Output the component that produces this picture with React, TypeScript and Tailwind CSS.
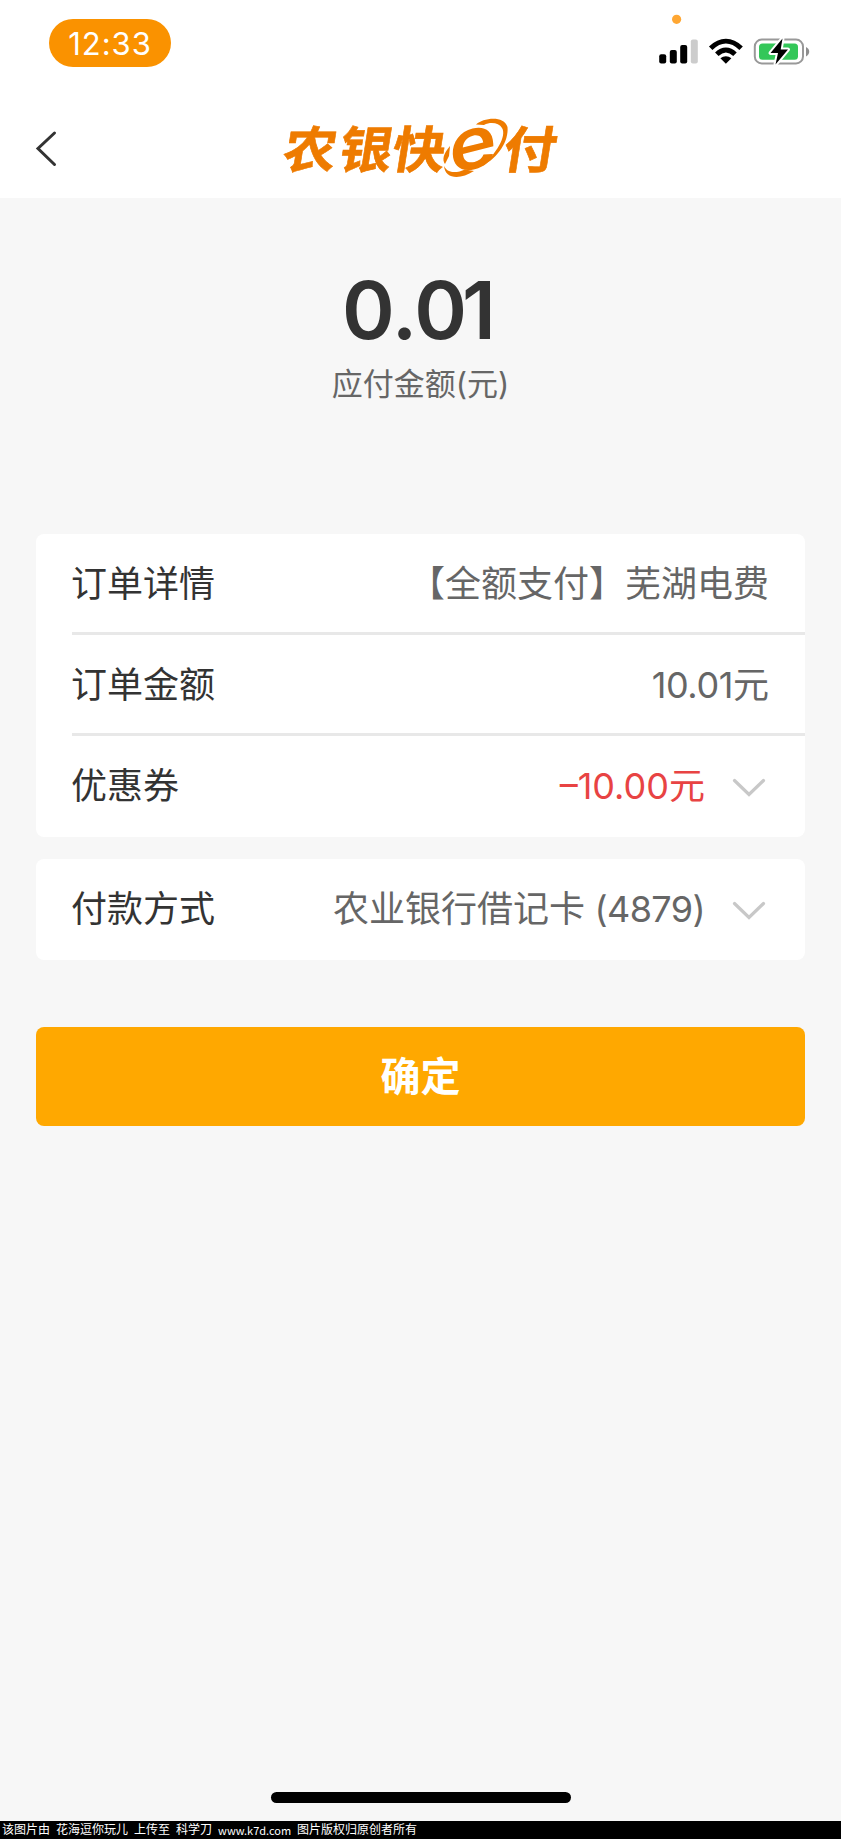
import React from 'react';

interface RowProps {
  label: string;
  children: React.ReactNode;
  divider?: boolean;
  expandable?: boolean;
}

const ChevronDown: React.FC = () => (
  <svg width="36" height="22" viewBox="0 0 36 22" fill="none" className="mt-1.5 shrink-0">
    <path d="M3.5 3.5 18 17.5 32.500 3.5" stroke="#c8c8c8" strokeWidth="3.2" strokeLinecap="round" />
  </svg>
);

const Row: React.FC<RowProps> = ({ label, children, divider = false, expandable = false }) => (
  <div
    className={`ml-9 flex h-[101px] items-center justify-between border-b-[3px] text-4xl ${
      divider ? 'border-[#e8e8e8]' : 'border-transparent'
    } ${expandable ? 'pr-[38px]' : 'pr-9'}`}
  >
    <span className="-ml-px pt-0.5 text-[#333333]">{label}</span>
    <span className="flex items-center gap-[26px] text-[#666666]">
      <span className="pt-0.5 whitespace-nowrap">{children}</span>
      {expandable && <ChevronDown />}
    </span>
  </div>
);

const StatusIcons: React.FC = () => (
  <svg width="201" height="90" viewBox="0 0 201 90">
    <circle cx="36.600" cy="19.300" r="4.600" fill="#ffa733" />
    <rect x="19.200" y="54.300" width="7" height="9.200" rx="2" />
    <rect x="29.800" y="50" width="7" height="13.500" rx="2" />
    <rect x="40.200" y="45" width="7" height="18.500" rx="2" />
    <rect x="50.800" y="39.500" width="7" height="24" rx="2" fill="#cccccc" />
    <g fill="none" stroke="#000" strokeWidth="5">
      <path d="M70.700 48.200C80.500 38.800 91.300 38.800 101.100 48.200" />
      <path d="M76.800 54.200C82.500 48.700 89.300 48.700 95 54.200" />
    </g>
    <path d="M80.400 58.300C83.700 55.500 88.100 55.500 91.400 58.300L85.900 63.700Z" />
    <rect x="114.800" y="39.600" width="48.200" height="23.800" rx="7" fill="none" stroke="#999" strokeWidth="2" />
    <rect x="119" y="43.600" width="39" height="16.200" rx="3.500" fill="#34c759" />
    <path d="M166 47C170.300 49 170.300 54.400 166 56.400Z" fill="#8e8e8e" />
    <path
      d="M142.500 38.500 130.500 53H138L135.500 64.500 148 49.500H140.700Z"
      stroke="#fff"
      strokeWidth="4"
      strokeLinejoin="round"
      paintOrder="stroke"
    />
  </svg>
);

const Logo: React.FC = () => (
  <svg
    width="300"
    height="93"
    viewBox="0 0 300 93"
    fill="#ee7b00"
    className="overflow-visible font-['Noto_Sans_CJK_SC',sans-serif] font-bold"
  >
    <g fontSize="50" stroke="#ee7b00" strokeWidth="0.6">
      <text transform="translate(11 62.500) skewX(-9) scale(1.06 1)">农</text>
      <text transform="translate(67 62.500) skewX(-9) scale(1.06 1)">银</text>
      <text transform="translate(120 62.500) skewX(-9) scale(1.06 1)">快</text>
      <text transform="translate(231 62.500) skewX(-9) scale(1.06 1)">付</text>
    </g>
    <text
      transform="translate(180 69.500) rotate(-14) skewX(-12) scale(1.16 1)"
      fontSize="71"
      className="font-['Inter',sans-serif] font-semibold"
    >
      e
    </text>
    <path d="M206 19.500C213 13 234 10 237.500 22C239 36 228 53 212 61C226 49 237 31 232 23C229 18 221 16.500 214 20Z" />
    <path d="M180 41C173 49 172 55 175 59L179 51Z" />
    <path d="M174 61C178 69 187 68 195 64.500L204 66C190 75 175 74 174 61Z" />
  </svg>
);

const App: React.FC = () => {
  return (
    <div className="flex h-[1839px] w-[841px] flex-col bg-[#f7f7f7] font-['Inter','Noto_Sans_CJK_SC',sans-serif]">
      <header className="h-[198px] bg-white">
        <div className="flex h-[105px] items-start justify-between pl-[49px]">
          <div className="mt-[19px] flex h-12 w-[122px] items-center justify-center rounded-full bg-[#fa9200] pt-0.5 text-[31px] tracking-[1px] text-white">
            12:33
          </div>
          <StatusIcons />
        </div>
        <div className="flex items-start">
          <button aria-label="返回" className="ml-[34px] mt-6 w-[236px]">
            <svg width="26" height="40" viewBox="0 0 26 40" fill="none">
              <path d="M20.500 4 4 19.500 20.500 35.500" stroke="#333" strokeWidth="3" strokeLinecap="round" />
            </svg>
          </button>
          <Logo />
        </div>
      </header>

      <main className="flex-1 px-9">
        <section className="flex h-[336px] flex-col items-center pt-[66px]">
          <div className="pr-2 text-[80px] leading-[92px] font-semibold tracking-[-5px] text-[#333333]">
            0<span className="mr-0.5 ml-0.5">.</span>01
          </div>
          <div className="mt-1.5 text-[31px] leading-[44px] text-[#666666]">应付金额(元)</div>
        </section>

        <section className="rounded-lg bg-white">
          <Row label="订单详情" divider>
            【全额支付】芜湖电费
          </Row>
          <Row label="订单金额" divider>
            <span className="tracking-[-0.4px]">10.01</span>元
          </Row>
          <Row label="优惠券" expandable>
            <span className="text-[#e84343]">–10.00元</span>
          </Row>
        </section>

        <section className="mt-[22px] rounded-lg bg-white">
          <Row label="付款方式" expandable>
            农业银行借记卡<span className="tracking-[-0.6px]"> (4879)</span>
          </Row>
        </section>

        <button className="mt-[67px] flex h-[99px] w-full items-center justify-center rounded-lg bg-[#ffa800] text-[40px] font-bold text-white">
          确定
        </button>
      </main>

      <div className="mx-auto mb-[18px] h-[11px] w-[300px] rounded-full bg-black" />

      <footer className="flex h-[18px] items-center gap-1.5 bg-black pl-0.5 text-xs leading-[18px] whitespace-nowrap text-white">
        <span>该图片由</span>
        <span>花海逗你玩儿</span>
        <span>上传至</span>
        <span>科学刀</span>
        <span className="w-[73px] font-['Noto_Sans_CJK_SC',sans-serif] text-[11px]">www.k7d.com</span>
        <span>图片版权归原创者所有</span>
      </footer>
    </div>
  );
};

export default App;
